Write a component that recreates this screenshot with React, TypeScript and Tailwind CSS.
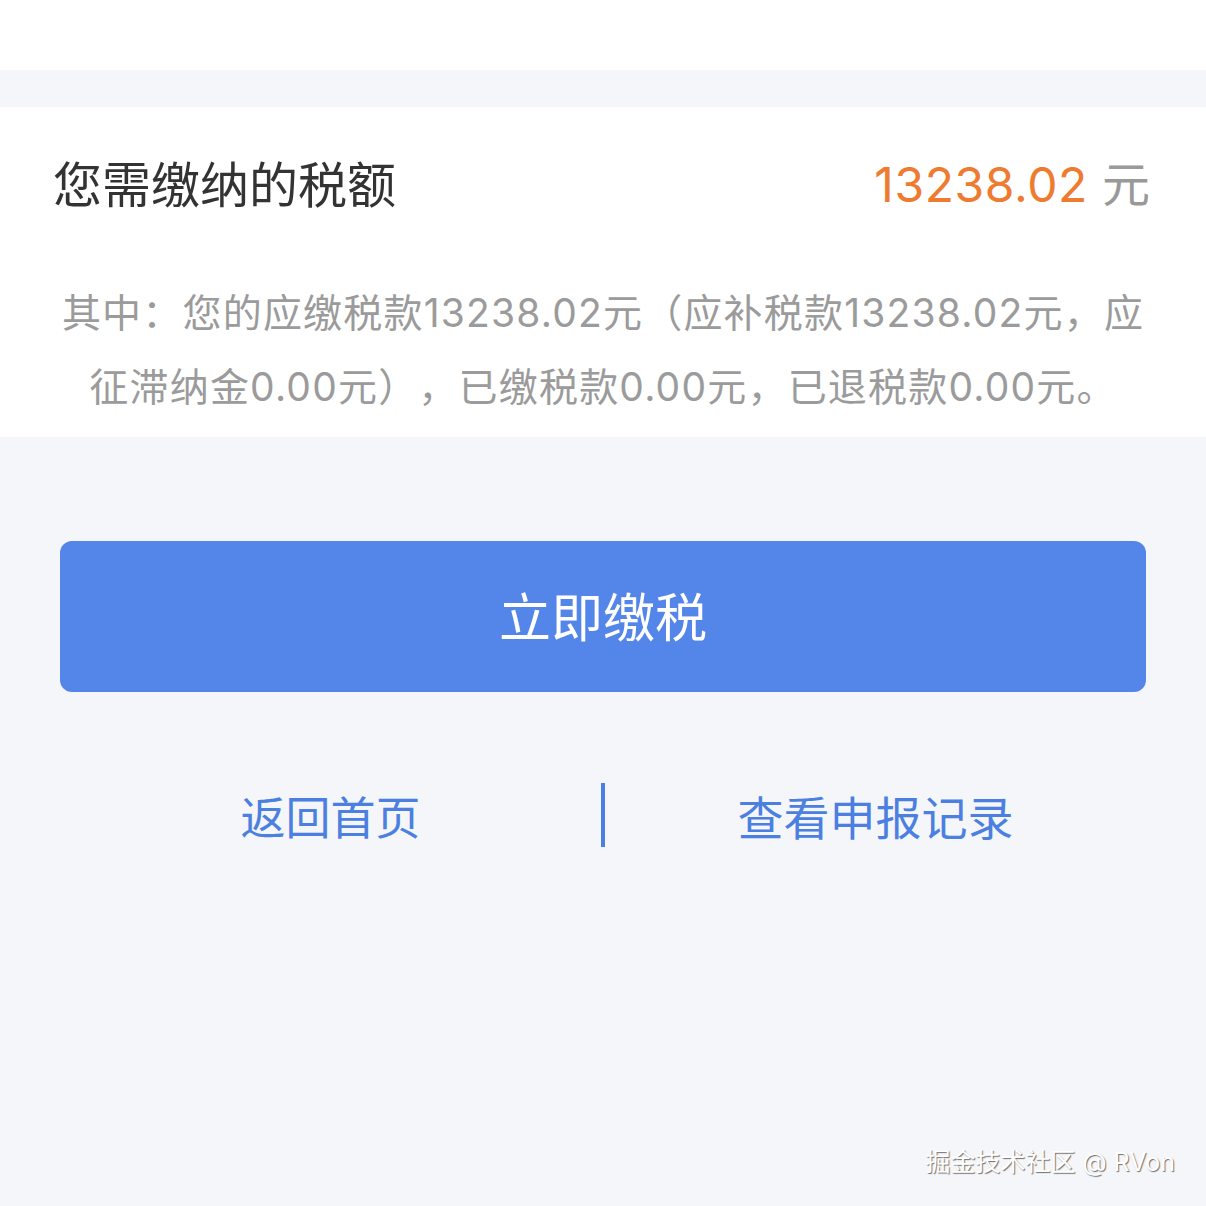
import React from "react";

// Inter carries the digits and Latin, CJK falls through to Noto Sans CJK SC
const FONT = { fontFamily: 'Inter, "Noto Sans CJK SC", "Noto Sans", sans-serif' };

export default function App() {
  return (
    <div
      className="relative h-[1206px] w-[1206px] overflow-hidden bg-[#f5f6fa] [text-spacing-trim:space-all]"
      style={FONT}
    >
      {/* header strip */}
      <div className="h-[70px] bg-white" />
      <div className="h-[37px]" />

      {/* tax amount card */}
      <section className="bg-white">
        <div className="flex h-[156px] items-center justify-between pl-[53px] pr-[56px]">
          <h1 className="text-[49px] font-normal leading-none text-[#333333]">您需缴纳的税额</h1>
          <div className="text-[48px] leading-none">
            <span className="tracking-[0.6px] text-[#ee7b30]">13238.02</span>
            <span className="ml-[14px] text-[#999999]">元</span>
          </div>
        </div>
        <p className="px-[20px] pt-[13px] pb-[13px] text-center text-[39px] leading-[74px] tracking-[1.2px] text-[#9b9b9b]">
          其中：您的应缴税款13238.02元（应补税款13238.02元，应
          <br />
          征滞纳金0.00元），已缴税款0.00元，已退税款0.00元。
        </p>
      </section>

      {/* actions */}
      <div className="px-[60px] pt-[104px]">
        <button className="flex h-[151px] w-full items-center justify-center rounded-[12px] bg-[#5485e8] pt-[5px] text-[52px] leading-none text-white">
          立即缴税
        </button>
        <div className="mt-[91px] flex h-[64px] items-center">
          <a className="flex-1 pt-[6px] text-center text-[45px] leading-none text-[#4b7fe0]">返回首页</a>
          <div className="h-[64px] w-[4px] bg-[#4b7fe0]" />
          <a className="flex-1 pt-[6px] text-center text-[46px] leading-none text-[#4b7fe0]">查看申报记录</a>
        </div>
      </div>

      {/* watermark */}
      <div className="absolute right-[31px] bottom-[31px] text-[25px] leading-none text-white [text-shadow:1px_1px_1px_rgba(0,0,0,0.55)]">
        掘金技术社区 @ RVon
      </div>
    </div>
  );
}
